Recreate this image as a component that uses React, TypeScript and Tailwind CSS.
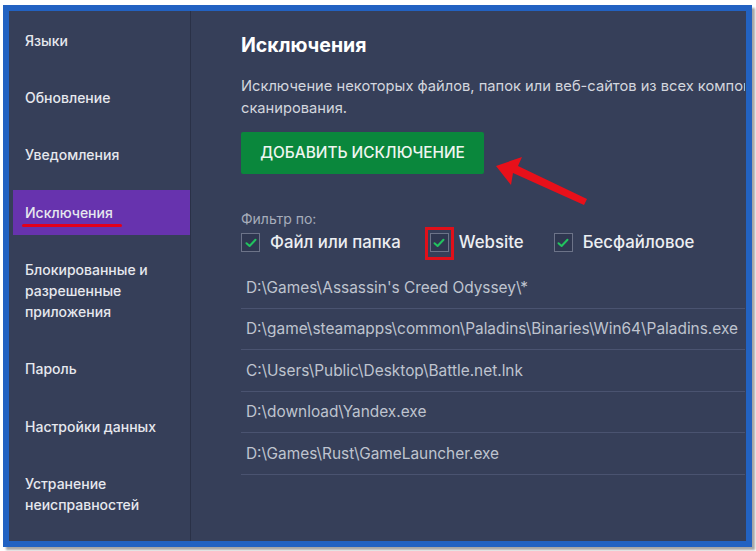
import React from "react";

const menu = [
  ["Языки"],
  ["Обновление"],
  ["Уведомления"],
  ["Исключения"],
  ["Блокированные и", "разрешенные", "приложения"],
  ["Пароль"],
  ["Настройки данных"],
  ["Устранение", "неисправностей"],
];

const paths = [
  "D:\\Games\\Assassin's Creed Odyssey\\*",
  "D:\\game\\steamapps\\common\\Paladins\\Binaries\\Win64\\Paladins.exe",
  "C:\\Users\\Public\\Desktop\\Battle.net.lnk",
  "D:\\download\\Yandex.exe",
  "D:\\Games\\Rust\\GameLauncher.exe",
];

function Check({ highlight }: { highlight?: boolean }) {
  return (
    <span className="relative flex h-[19px] w-[19px] shrink-0 items-center justify-center border-[1.5px] border-[#6c7388] bg-[#2f3750]">
      <svg width="12" height="10" viewBox="0 0 12 10">
        <path d="M1.5 5.2 L4.6 8 L10.5 1.8" fill="none" stroke="#22c35f" strokeWidth="2" strokeLinecap="round" strokeLinejoin="round" />
      </svg>
      {highlight && (
        <span className="absolute -top-[7px] -bottom-[9px] -left-[6px] -right-[6px] border-[3px] border-[#e0101a]" />
      )}
    </span>
  );
}

export default function App() {
  return (
    <div className="h-[551px] w-[756px] bg-white pl-[3px] pt-[5px]" style={{ fontFamily: "Inter, 'Noto Sans', sans-serif" }}>
      <div className="relative flex h-[542px] w-[749px] border-[6px] border-[#2262c2] bg-[#363f59] shadow-[3px_3px_2px_rgba(0,0,0,0.35)]">
        {/* sidebar */}
        <div className="relative flex w-[182px] shrink-0 flex-col gap-3 border-r border-[#2a3147] pl-[4px] pt-[7px]">
          {menu.map((lines, i) => (
            <div
              key={i}
              className={
                "py-3 pl-3 text-[14px] font-medium leading-[21.2px] text-[#e6e8ee] " +
                (i === 3 ? "relative bg-[#6733ae]" : "")
              }
            >
              {lines.map((l) => (
                <div key={l}>{l}</div>
              ))}
              {i === 3 && <span className="absolute left-[9px] top-[34px] h-[3px] w-[100px] rounded-full bg-[#e3001b]" />}
            </div>
          ))}
        </div>

        {/* content */}
        <div className="w-[554px] shrink-0 overflow-hidden pl-[50px] pt-[22px]">
          <h1 className="text-[19.5px] font-bold leading-[24px] text-white">Исключения</h1>
          <p className="mt-[18px] w-[640px] text-[14.7px] leading-[22px] text-[#d3d6de]">
            Исключение некоторых файлов, папок или веб-сайтов из всех компонентов защиты и сканирования.
          </p>
          <button className="mt-[13px] flex h-[42px] w-[243px] items-center justify-center rounded-[2px] bg-[#0a873c] text-[15.4px] font-medium text-[#eef6f0]">
            ДОБАВИТЬ ИСКЛЮЧЕНИЕ
          </button>

          <div className="mt-[36px] text-[14px] leading-[17px] text-[#a7adbb]">Фильтр по:</div>
          <div className="mt-[3px] flex items-center">
            <label className="flex items-center gap-[10px]">
              <Check />
              <span className="text-[16.8px] font-medium text-[#eceef2]">Файл или папка</span>
            </label>
            <label className="ml-[29px] flex items-center gap-[10px]">
              <Check highlight />
              <span className="text-[16.8px] font-medium text-[#eceef2]">Website</span>
            </label>
            <label className="ml-[30px] flex items-center gap-[10px]">
              <Check />
              <span className="text-[16.8px] font-medium text-[#eceef2]">Бесфайловое</span>
            </label>
          </div>

          <div className="mt-[12px]">
            {paths.map((p) => (
              <div key={p} className="flex h-[41.5px] items-center whitespace-nowrap border-b border-[#4a5370] pl-[5px] text-[15.4px] text-[#bfc4cf]">
                {p}
              </div>
            ))}
          </div>
        </div>

        {/* annotation arrow */}
        <svg className="pointer-events-none absolute left-[-9px] top-[-11px]" width="756" height="551">
          <polygon points="496,166 522,157 518,166 587,199 584,205 513,173 511,185" fill="#e8101a" />
        </svg>
      </div>
    </div>
  );
}
